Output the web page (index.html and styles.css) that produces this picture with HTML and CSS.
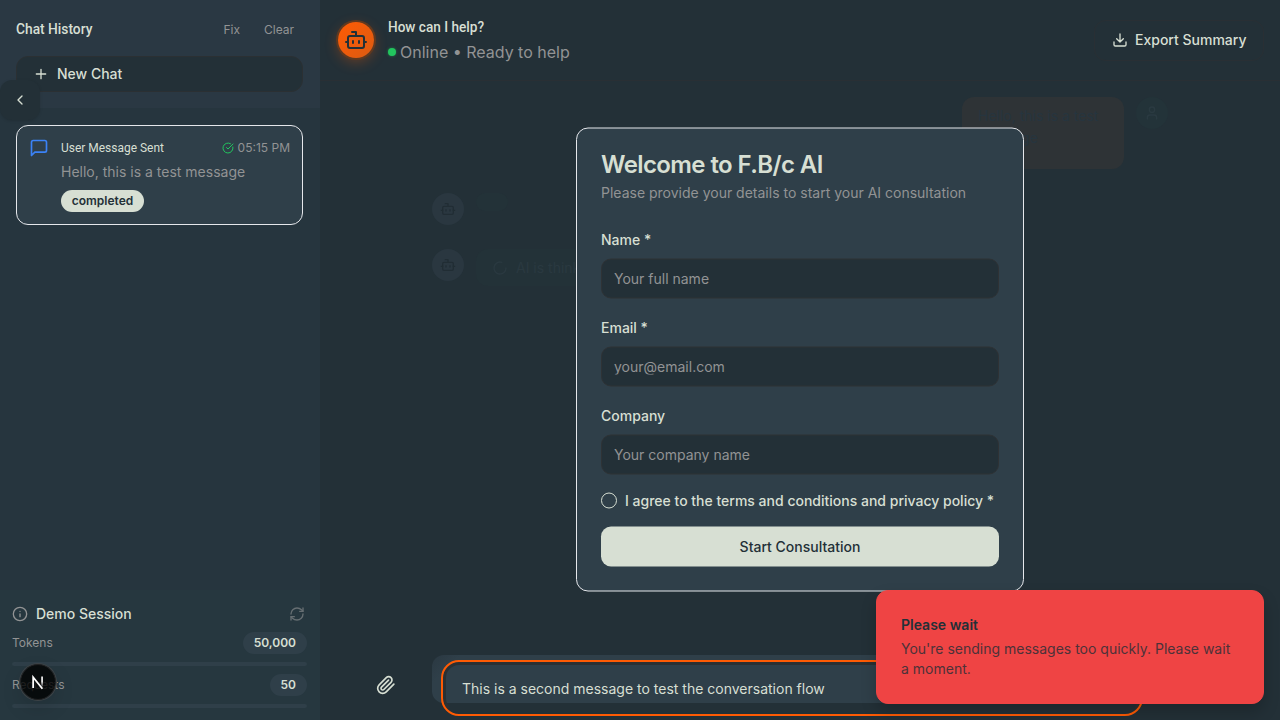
FILE: index.html
```html
<!DOCTYPE html>
<html lang="en">
<head>
<meta charset="utf-8">
<title>F.B/c AI</title>
<link rel="stylesheet" href="styles.css">
</head>
<body>
<svg class="defs" width="0" height="0">
  <symbol id="bot" viewBox="0 0 24 24"><path d="M12 8V4H8"/><rect width="16" height="12" x="4" y="8" rx="2"/><path d="M2 14h2M20 14h2M15 13v2M9 13v2"/></symbol>
</svg>
<div class="app">
  <aside class="sidebar">
    <header class="side-head">
      <div class="side-title"><h2 class="display">Chat History</h2><div class="actions"><span>Fix</span><span>Clear</span></div></div>
      <button class="new-chat"><svg class="icon" viewBox="0 0 24 24"><path d="M5 12h14M12 5v14"/></svg>New Chat</button>
    </header>
    <div class="history">
      <article class="entry">
        <svg class="icon msg" viewBox="0 0 24 24"><path d="M21 15a2 2 0 0 1-2 2H7l-4 4V5a2 2 0 0 1 2-2h14a2 2 0 0 1 2 2z"/></svg>
        <div class="entry-body">
          <div class="entry-top"><h3 class="display">User Message Sent</h3><span class="time"><svg class="icon check" viewBox="0 0 24 24"><path d="M21.801 10A10 10 0 1 1 17 3.335"/><path d="m9 11 3 3L22 4"/></svg>05:15 PM</span></div>
          <p>Hello, this is a test message</p>
          <span class="badge">completed</span>
        </div>
      </article>
    </div>
    <footer class="session">
      <div class="session-head"><svg class="icon" viewBox="0 0 24 24"><circle cx="12" cy="12" r="10"/><path d="M12 16v-4M12 8h.01"/></svg><span>Demo Session</span><svg class="icon refresh" viewBox="0 0 24 24"><path d="M3 12a9 9 0 0 1 9-9 9.75 9.75 0 0 1 6.74 2.74L21 8"/><path d="M21 3v5h-5"/><path d="M21 12a9 9 0 0 1-9 9 9.75 9.75 0 0 1-6.74-2.74L3 16"/><path d="M8 16H3v5"/></svg></div>
      <div class="meter"><div><span>Tokens</span><b>50,000</b></div><i></i></div>
      <div class="meter"><div><span>Requests</span><b>50</b></div><i></i></div>
    </footer>
  </aside>
  <main class="main">
    <header class="top">
      <div class="avatar"><svg class="icon" viewBox="0 0 24 24"><use href="#bot"/></svg></div>
      <div class="who"><h1 class="display">How can I help?</h1><p><i class="dot"></i>Online • Ready to help</p></div>
      <button class="export"><svg class="icon" viewBox="0 0 24 24"><path d="M21 15v4a2 2 0 0 1-2 2H5a2 2 0 0 1-2-2v-4"/><path d="m7 10 5 5 5-5M12 15V3"/></svg>Export Summary</button>
    </header>
    <section class="thread">
      <div class="row user"><div class="bubble">Hello, this is a test message</div><div class="face"><svg class="icon" viewBox="0 0 24 24"><path d="M19 21v-2a4 4 0 0 0-4-4H9a4 4 0 0 0-4 4v2"/><circle cx="12" cy="7" r="4"/></svg></div></div>
      <div class="row"><div class="face bot"><svg class="icon" viewBox="0 0 24 24"><use href="#bot"/></svg></div><div class="blank"></div></div>
      <div class="row"><div class="face bot"><svg class="icon" viewBox="0 0 24 24"><use href="#bot"/></svg></div><div class="thinking"><svg class="icon" viewBox="0 0 24 24"><path d="M21 12a9 9 0 1 1-6.219-8.56"/></svg>AI is thinking...</div></div>
    </section>
    <section class="composer">
      <svg class="icon clip" viewBox="0 0 24 24"><path d="m21.44 11.05-9.19 9.19a6 6 0 0 1-8.49-8.49l8.57-8.57A4 4 0 1 1 18 8.84l-8.59 8.57a2 2 0 0 1-2.83-2.83l8.49-8.48"/></svg>
      <div class="field"><div class="focus">This is a second message to test the conversation flow</div></div>
    </section>
  </main>
</div>
<button class="collapse"><svg class="icon" viewBox="0 0 24 24"><path d="m15 18-6-6 6-6"/></svg></button>
<form class="modal">
  <h2>Welcome to F.B/c AI</h2>
  <p>Please provide your details to start your AI consultation</p>
  <label>Name *</label><input placeholder="Your full name">
  <label>Email *</label><input placeholder="your@email.com">
  <label>Company</label><input placeholder="Your company name">
  <div class="agree"><i></i>I agree to the terms and conditions and privacy policy *</div>
  <button type="button">Start Consultation</button>
</form>
<div class="dev"><svg viewBox="0 0 40 40"><defs><linearGradient id="fade" x1="0" y1="13" x2="0" y2="26" gradientUnits="userSpaceOnUse"><stop stop-color="#fff"/><stop offset=".5" stop-color="#fff"/><stop offset="1" stop-color="#fff" stop-opacity="0"/></linearGradient></defs><path d="M14.3 27V14.4L25.2 28" fill="none" stroke="#fff" stroke-width="2.1"/><path d="M24.8 13.5v12.5" stroke="url(#fade)" stroke-width="1.9"/></svg></div>
<div class="toast"><strong>Please wait</strong><p>You're sending messages too quickly. Please wait a moment.</p></div>
</body>
</html>
```
FILE: styles.css
```css
* { box-sizing: border-box; margin: 0; }
body { width: 1280px; height: 720px; overflow: hidden; background: #233037; color: #d7dfd3; font: 14px/20px Inter, sans-serif; }
button { font: 500 14px/20px Inter, sans-serif; color: inherit; border: 0; }
.defs { position: absolute; }
.icon { width: 16px; height: 16px; flex: none; fill: none; stroke: currentColor; stroke-width: 2; stroke-linecap: round; stroke-linejoin: round; }
.display { font-family: Roboto, sans-serif; font-weight: 500; transform-origin: left center; white-space: nowrap; }
.app { display: flex; height: 720px; }
.sidebar { width: 320px; display: flex; flex-direction: column; background: #26353e; }
.side-head { height: 108px; padding: 16px; background: #2a3843; }
.side-title { display: flex; justify-content: space-between; align-items: center; height: 28px; margin-bottom: 12px; }
.side-title .display { font-size: 15px; line-height: 20px; margin-bottom: 2px; transform: scaleX(.918); }
.actions { display: flex; gap: 24px; padding-right: 10px; font-size: 12px; color: #929394; }
.new-chat { display: flex; align-items: center; gap: 8px; width: 287px; height: 36px; padding: 0 16px; border: 1px solid #2b3033; border-radius: 12px; background: #233037; }
.history { flex: 1; padding: 17px 16px; }
.entry { display: flex; gap: 12px; width: 287px; height: 100px; padding: 12px; border: 1px solid #e5e7eb; border-radius: 12px; background: #2f3f49; }
.msg { width: 20px; height: 20px; color: #3b82f6; }
.entry-body { flex: 1; }
.entry-top { display: flex; justify-content: space-between; height: 20px; }
.entry-top .display { width: 105px; font-size: 13px; font-weight: 400; transform: scaleX(.92); }
.time { display: flex; align-items: center; gap: 4px; font-size: 12px; color: #929394; }
.check { width: 12px; height: 12px; color: #22c55e; }
.entry p { margin: 4px 0 8px; color: #929394; }
.badge { display: block; width: 83px; height: 22px; border-radius: 11px; background: #d7dfd3; color: #233037; text-align: center; font: 600 12px/22px Inter, sans-serif; }
.session { height: 130px; padding: 14px 12px 16px; background: #26373f; }
.session-head { display: flex; align-items: center; gap: 8px; height: 20px; margin-bottom: 8px; font-weight: 500; }
.session-head > .icon { color: #929394; }
.session-head .refresh { margin: 0 3px 0 auto; color: #666e72; }
.meter { width: 295px; height: 34px; margin-bottom: 8px; font-size: 12px; color: #929394; }
.meter div { display: flex; justify-content: space-between; align-items: center; height: 22px; margin-bottom: 8px; }
.meter b { padding: 0 11px; border-radius: 11px; background: #2f3f49; color: #d7dfd3; font: 600 12px/22px Inter, sans-serif; }
.meter i { display: block; height: 4px; border-radius: 2px; background: #2f3f49; }
.main { flex: 1; display: flex; flex-direction: column; min-width: 0; }
.top { display: flex; align-items: center; height: 81px; padding: 0 16px 0 18px; border-bottom: 1px solid #292f34; }
.avatar { display: grid; place-items: center; width: 36px; height: 36px; border-radius: 50%; background: linear-gradient(135deg, #ff5b04, #dc5b12); box-shadow: 0 0 0 2px #60391f, 0 4px 14px #ff5b0450; color: #233037; }
.avatar .icon { width: 24px; height: 24px; }
.who { flex: 1; margin-left: 14px; }
.who .display { height: 24px; font-size: 15px; line-height: 22px; transform: scaleX(.907); }
.who p { display: flex; align-items: center; gap: 4px; font-size: 16px; line-height: 24px; color: #929394; }
.who .dot { width: 8px; height: 8px; border-radius: 50%; background: #22c55e; box-shadow: 0 0 3px #22c55e80; }
.export { display: flex; align-items: center; gap: 7px; width: 170px; height: 41px; padding: 0 17px; border: 1px solid #292f34; border-radius: 12px; background: none; white-space: nowrap; }
.thread { flex: 1; padding: 16px 112px; }
.row { display: flex; gap: 12px; height: 32px; margin-bottom: 24px; }
.row.user { justify-content: flex-end; height: 72px; }
.bubble { width: 162px; height: 72px; padding: 8px 16px; border-radius: 12px; background: #2e3336; color: #26353f; line-height: 22px; }
.face { display: grid; place-items: center; width: 32px; height: 32px; border-radius: 50%; background: #233339; color: #2a3a41; }
.face.bot { background: #2a3740; color: #212d34; }
.blank { width: 32px; height: 18px; border-radius: 9px; background: #233238; }
.thinking { display: flex; align-items: center; gap: 8px; width: 155px; height: 37px; padding: 0 16px; border-radius: 12px; background: #233238; color: #2a3940; white-space: nowrap; }
.composer { display: flex; gap: 36px; height: 65px; padding: 0 136px 0 56px; }
.clip { width: 20px; height: 20px; margin-top: 20px; }
.field { width: 720px; height: 48px; padding: 7px 11px; border-radius: 12px; background: linear-gradient(135deg, #2a3841, #2f3f49 20px); }
.focus { width: 698px; height: 52px; padding: 14px 16px; border: 3px solid #2b3033; border-bottom-color: transparent; border-radius: 16px; outline: 2px solid #ff5b04; }
.collapse { position: absolute; left: 0; top: 80px; width: 40px; height: 40px; padding: 12px; border-radius: 12px; background: #233037; box-shadow: 0 1px 3px #0002; }
.collapse .icon { display: block; }
.modal { position: absolute; left: 576px; top: 127px; width: 448px; height: 464px; padding: 24px; border: 1px solid #e5e7eb; border-radius: 12px; background: #2f3f49; display: flex; flex-direction: column; transform: translateY(.5px); }
.modal h2 { font-size: 24px; line-height: 24px; font-weight: 600; letter-spacing: -.6px; }
.modal p { margin: 6px 0 30px; color: #929394; }
.modal label { height: 14px; margin-bottom: 12px; font-weight: 500; line-height: 14px; }
.modal input { height: 40px; margin-bottom: 22px; padding: 0 12px 2px; border: 1px solid #2e3235; border-radius: 10px; background: #233037; font: 14px Inter, sans-serif; flex: none; }
.modal input::placeholder { color: #929394; opacity: 1; }
.agree { display: flex; align-items: center; gap: 8px; height: 16px; margin: -4px 0 18px; font-weight: 500; white-space: nowrap; }
.agree i { width: 16px; height: 16px; border: 1px solid #d7dfd3; border-radius: 50%; flex: none; }
.modal > button { height: 40px; border-radius: 10px; background: #d7dfd3; color: #233037; }
.dev { position: absolute; left: 20px; top: 664px; width: 36px; height: 36px; border-radius: 50%; background: #000c; border: 1px solid #222; box-shadow: 0 0 0 1px #3c4246, 0 8px 20px #0002; }
.dev svg { display: block; width: 34px; height: 34px; }
.toast { position: absolute; left: 876px; top: 590px; width: 388px; height: 114px; padding: 24px; border: 1px solid #ef4444; border-radius: 12px; background: #ef4444; color: #233037; box-shadow: 0 8px 16px #0003; }
.toast strong { display: block; margin-bottom: 4px; font-weight: 600; }
.toast p { color: #4d3239; }
```
